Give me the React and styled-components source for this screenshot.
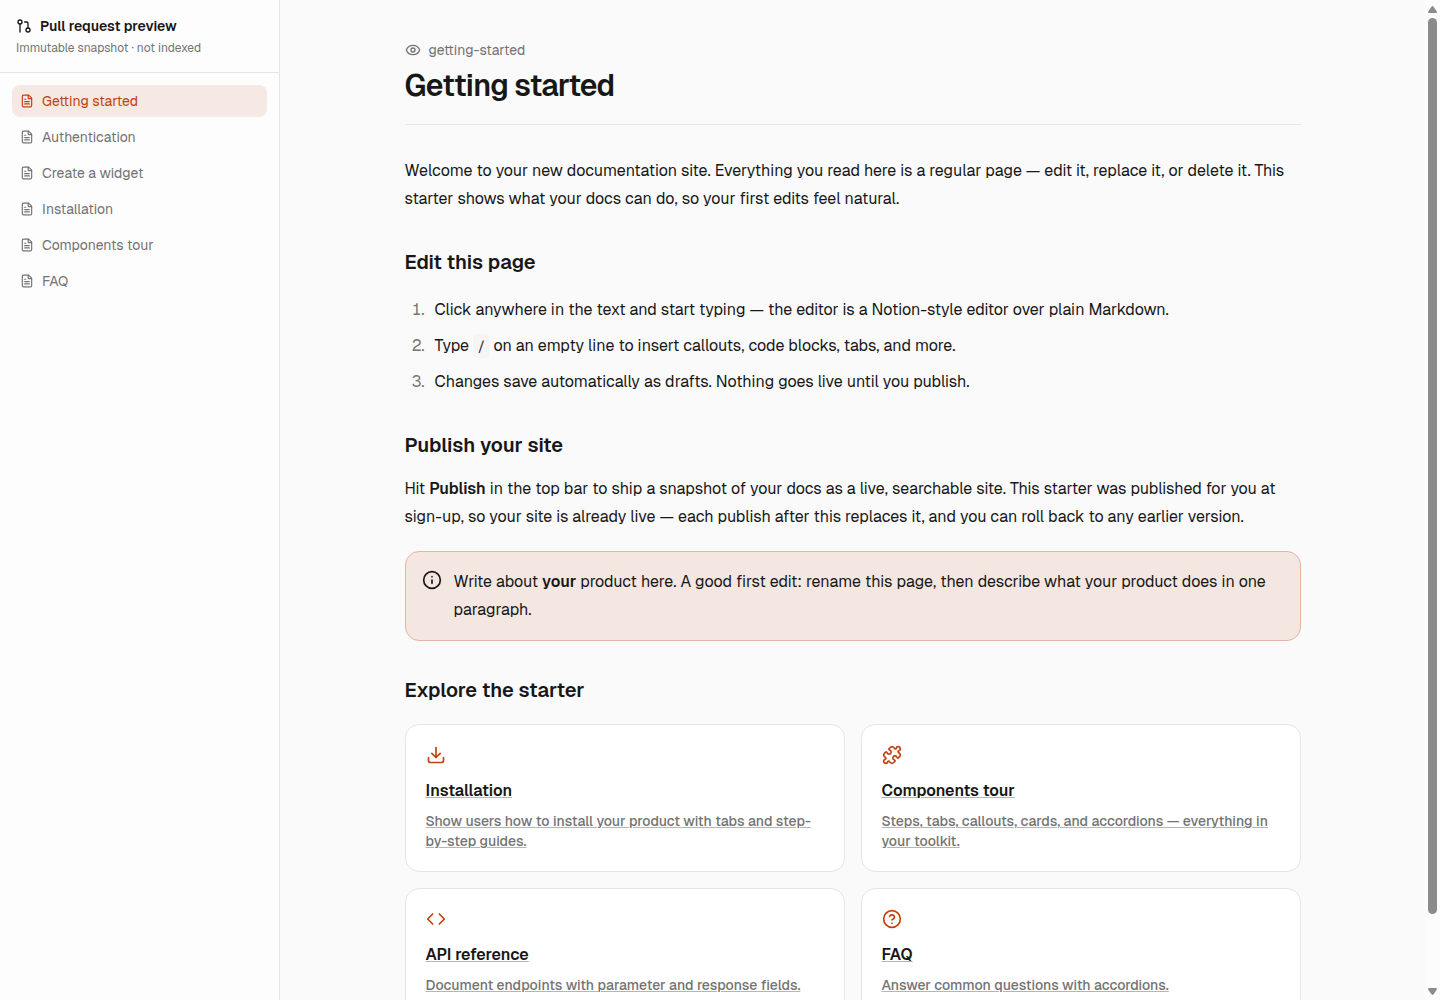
import { useEffect, useRef, useState } from 'react';
import styled, { createGlobalStyle } from 'styled-components';
import {
  CircleQuestionMark,
  Code,
  Download,
  Eye,
  FileText,
  GitPullRequest,
  Info,
  Puzzle,
} from 'lucide-react';

const pages = [
  { title: 'Getting started', slug: 'getting-started' },
  { title: 'Authentication', slug: 'authentication' },
  { title: 'Create a widget', slug: 'create-a-widget' },
  { title: 'Installation', slug: 'installation' },
  { title: 'Components tour', slug: 'components-tour' },
  { title: 'FAQ', slug: 'faq' },
];

const cards = [
  {
    title: 'Installation',
    href: '#installation',
    icon: Download,
    text: 'Show users how to install your product with tabs and step-by-step guides.',
  },
  {
    title: 'Components tour',
    href: '#components-tour',
    icon: Puzzle,
    text: 'Steps, tabs, callouts, cards, and accordions — everything in your toolkit.',
  },
  {
    title: 'API reference',
    href: '#api-reference',
    icon: Code,
    text: 'Document endpoints with parameter and response fields.',
  },
  {
    title: 'FAQ',
    href: '#faq',
    icon: CircleQuestionMark,
    text: 'Answer common questions with accordions.',
  },
];

const Sidebar = ({ current }) => (
  <StyledSidebar>
    <StyledSidebarHeader>
      <StyledSidebarTitle>
        <GitPullRequest size={16} />
        Pull request preview
      </StyledSidebarTitle>
      <StyledSidebarNote>Immutable snapshot · not indexed</StyledSidebarNote>
    </StyledSidebarHeader>
    <StyledNav aria-label="Pages">
      {pages.map((page) => (
        <StyledNavLink
          key={page.slug}
          href={`#${page.slug}`}
          $active={page.slug === current}
        >
          <FileText size={14} />
          {page.title}
        </StyledNavLink>
      ))}
    </StyledNav>
  </StyledSidebar>
);

const Card = ({ title, href, icon: Icon, text }) => (
  <StyledCard href={href}>
    <Icon size={20} />
    <StyledCardTitle>{title}</StyledCardTitle>
    <StyledCardText>{text}</StyledCardText>
  </StyledCard>
);

const Scrollbar = ({ target }) => {
  const [thumb, setThumb] = useState({ before: 0, size: 100 });

  useEffect(() => {
    const el = target.current;
    const update = () =>
      setThumb({
        before: (el.scrollTop / el.scrollHeight) * 100,
        size: (el.clientHeight / el.scrollHeight) * 100,
      });
    update();
    el.addEventListener('scroll', update);
    window.addEventListener('resize', update);
    return () => {
      el.removeEventListener('scroll', update);
      window.removeEventListener('resize', update);
    };
  }, [target]);

  const scroll = (top) => target.current.scrollBy({ top });

  return (
    <StyledScrollbar>
      <StyledScrollButton aria-label="Scroll up" onClick={() => scroll(-40)}>
        <svg width="9" height="7" viewBox="0 0 9 7">
          <path d="M3.6.5Q4.5-.4 5.4.5L8.8 5.4Q9.3 7 8 7H1Q-.3 7 .2 5.4Z" />
        </svg>
      </StyledScrollButton>
      <StyledScrollTrack>
        <div style={{ height: `${thumb.before}%` }} />
        <StyledScrollThumb style={{ height: `${thumb.size}%` }} />
      </StyledScrollTrack>
      <StyledScrollButton aria-label="Scroll down" onClick={() => scroll(40)}>
        <svg width="9" height="7" viewBox="0 0 9 7">
          <path d="M3.6 6.5Q4.5 7.4 5.4 6.5L8.8 1.6Q9.3 0 8 0H1Q-.3 0 .2 1.6Z" />
        </svg>
      </StyledScrollButton>
    </StyledScrollbar>
  );
};

const App = () => {
  const main = useRef(null);
  return (
    <>
      <GlobalStyles />
      <StyledLayout>
        <Sidebar current="getting-started" />
        <StyledMain ref={main}>
          <StyledArticle>
            <StyledPageHeader>
              <StyledSlug>
                <Eye size={16} />
                getting-started
              </StyledSlug>
              <h1>Getting started</h1>
            </StyledPageHeader>
            <StyledProse>
              <p>
                Welcome to your new documentation site. Everything you read here
                is a regular page — edit it, replace it, or delete it. This
                starter shows what your docs can do, so your first edits feel
                natural.
              </p>
              <h2>Edit this page</h2>
              <ol>
                <li>
                  Click anywhere in the text and start typing — the editor is a
                  Notion-style editor over plain Markdown.
                </li>
                <li>
                  Type <code>/</code> on an empty line to insert callouts, code
                  blocks, tabs, and more.
                </li>
                <li>
                  Changes save automatically as drafts. Nothing goes live until
                  you publish.
                </li>
              </ol>
              <h2>Publish your site</h2>
              <p>
                Hit <strong>Publish</strong> in the top bar to ship a snapshot
                of your docs as a live, searchable site. This starter was
                published for you at sign-up, so your site is already live —
                each publish after this replaces it, and you can roll back to
                any earlier version.
              </p>
              <StyledCallout>
                <Info size={20} />
                <p>
                  Write about <strong>your</strong> product here. A good first
                  edit: rename this page, then describe what your product does
                  in one paragraph.
                </p>
              </StyledCallout>
              <h2>Explore the starter</h2>
              <StyledCards>
                {cards.map((card) => (
                  <Card key={card.title} {...card} />
                ))}
              </StyledCards>
            </StyledProse>
          </StyledArticle>
        </StyledMain>
        <Scrollbar target={main} />
      </StyledLayout>
    </>
  );
};

const GlobalStyles = createGlobalStyle`
  :root {
    --Primary: #c2410c;
    --PrimarySoft: #f6e8e3;
    --Background: #fafafa;
    --Surface: #fdfdfd;
    --Border: #e5e5e5;
    --Text: #171717;
    --Muted: #737373;
    --Scrollbar: #8b8b8b;
  }
  *,
  *::before,
  *::after {
    box-sizing: border-box;
  }
  body {
    margin: 0;
    background: var(--Background);
    color: var(--Text);
    font-family: 'Geist', Inter, 'Liberation Sans', sans-serif;
    font-size: 16px;
  }
  h1,
  h2,
  p,
  ol {
    margin: 0;
  }
  svg {
    flex-shrink: 0;
  }
`;

const StyledLayout = styled.div`
  display: flex;
  height: 100vh;
`;

const StyledSidebar = styled.aside`
  width: 280px;
  flex-shrink: 0;
  background: var(--Surface);
  border-right: 1px solid var(--Border);
`;

const StyledSidebarHeader = styled.div`
  padding: 16px;
  border-bottom: 1px solid var(--Border);
`;

const StyledSidebarTitle = styled.div`
  display: flex;
  align-items: center;
  gap: 8px;
  font-size: 14px;
  line-height: 20px;
  font-weight: 600;
`;

const StyledSidebarNote = styled.p`
  margin-top: 4px;
  font-size: 12px;
  line-height: 16px;
  color: var(--Muted);
`;

const StyledNav = styled.nav`
  display: flex;
  flex-direction: column;
  gap: 4px;
  padding: 12px;
`;

const StyledNavLink = styled.a`
  display: flex;
  align-items: center;
  gap: 8px;
  padding: 6px 8px;
  border-radius: 8px;
  font-size: 14px;
  line-height: 20px;
  text-decoration: none;
  color: ${({ $active }) => ($active ? 'var(--Primary)' : 'var(--Muted)')};
  background: ${({ $active }) => ($active ? 'var(--PrimarySoft)' : 'none')};
`;

const StyledMain = styled.main`
  flex: 1;
  min-width: 0;
  overflow-y: auto;
  /* the bar is drawn by Scrollbar */
  scrollbar-width: none;
`;

const StyledScrollbar = styled.div`
  display: flex;
  flex-direction: column;
  flex-shrink: 0;
  width: 15px;
  background: #fcfcfc;
`;

const StyledScrollButton = styled.button`
  display: flex;
  align-items: center;
  justify-content: center;
  height: 18px;
  padding: 0;
  border: 0;
  background: none;
  svg {
    fill: var(--Scrollbar);
  }
`;

const StyledScrollTrack = styled.div`
  flex: 1;
  min-height: 0;
`;

const StyledScrollThumb = styled.div`
  width: 9px;
  margin: 0 auto;
  border-radius: 5px;
  background: var(--Scrollbar);
`;

const StyledArticle = styled.article`
  max-width: 960px;
  margin: 0 auto;
  padding: 40px 32px 60px;
`;

const StyledPageHeader = styled.header`
  padding-bottom: 20px;
  border-bottom: 1px solid var(--Border);
  h1 {
    margin-top: 8px;
    font-size: 30px;
    line-height: 36px;
    font-weight: 600;
    letter-spacing: -0.025em;
  }
`;

const StyledSlug = styled.div`
  display: flex;
  align-items: center;
  gap: 8px;
  font-size: 14px;
  line-height: 20px;
  color: var(--Muted);
`;

const StyledProse = styled.div`
  padding-top: 32px;
  line-height: 28px;
  h2 {
    margin-top: 35px;
    font-size: 20px;
    line-height: 28px;
    font-weight: 600;
  }
  h2 + p {
    margin-top: 16px;
  }
  ol {
    margin-top: 20px;
    padding-left: 24px;
  }
  li {
    padding-left: 6px;
  }
  li + li {
    margin-top: 8px;
  }
  li::marker {
    color: var(--Muted);
  }
  strong {
    font-weight: 600;
  }
  code {
    padding: 3px 4px;
    border-radius: 4px;
    background: #f5f5f5;
    font-family: 'Geist Mono', 'Liberation Mono', monospace;
    font-size: 14px;
    line-height: 20px;
  }
`;

const StyledCallout = styled.aside`
  display: flex;
  gap: 12px;
  margin-top: 20px;
  padding: 16px;
  border: 1px solid #e5b5a3;
  border-radius: 14px;
  background: #f4e7e2;
  svg {
    margin-top: 2px;
  }
`;

const StyledCards = styled.div`
  display: grid;
  grid-template-columns: repeat(2, 1fr);
  gap: 16px;
  margin-top: 20px;
`;

const StyledCard = styled.a`
  display: flex;
  flex-direction: column;
  align-items: flex-start;
  padding: 20px;
  border: 1px solid var(--Border);
  border-radius: 14px;
  background: #fff;
  color: var(--Primary);
  text-decoration: none;
`;

const StyledCardTitle = styled.span`
  margin-top: 12px;
  font-weight: 600;
  line-height: 28px;
  color: var(--Text);
  text-decoration: underline #b5b5b5 1px;
  text-underline-offset: 1px;
`;

const StyledCardText = styled.span`
  margin-top: 6px;
  font-size: 14px;
  line-height: 20px;
  font-weight: 500;
  color: var(--Muted);
  text-decoration: underline #b5b5b5 1px;
  text-underline-offset: 1px;
`;

export default App;
